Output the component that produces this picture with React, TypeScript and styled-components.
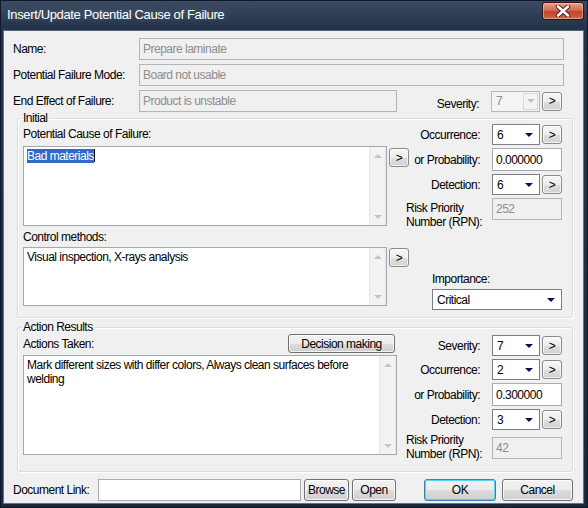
import styled, { createGlobalStyle } from 'styled-components';

const FONT = `"Liberation Sans", Arial, sans-serif`;
const TRACKING = '-0.5px';

const GlobalStyle = createGlobalStyle`
  * { box-sizing: border-box; }
  html, body { margin: 0; padding: 0; background: #ffffff; }
  body { font-family: ${FONT}; font-size: 12px; letter-spacing: ${TRACKING}; color: #000000; }
`;

type ComboProps = { value: string; width?: number; disabled?: boolean };

function Combo({ value, width = 49, disabled }: ComboProps) {
  return (
    <StyledCombo $w={width} $disabled={disabled}>
      <span>{value}</span>
      {disabled ? (
        <DisabledDrop>
          <Arrow $color="#c2c2c2" />
        </DisabledDrop>
      ) : (
        <Arrow $color="#0c0c5a" />
      )}
    </StyledCombo>
  );
}

function ComboWithButton({ value, disabled }: { value: string; disabled?: boolean }) {
  return (
    <ControlPair>
      <Combo value={value} disabled={disabled} />
      <SideButton>&gt;</SideButton>
    </ControlPair>
  );
}

function TextBox({ width, height, children }: { width: number; height: number; children: React.ReactNode }) {
  return (
    <StyledTextBox $w={width} $h={height}>
      <TextContent>{children}</TextContent>
      <ScrollBar>
        <ScrollArrow $up />
        <ScrollArrow />
      </ScrollBar>
    </StyledTextBox>
  );
}

type RatingProps = {
  severity?: string;
  occurrence: string;
  probability: string;
  detection: string;
  rpn: string;
  rpnLabelTop: number;
  rpnInputTop: number;
};

function RatingGrid({ severity, occurrence, probability, detection, rpn, rpnLabelTop, rpnInputTop }: RatingProps) {
  return (
    <Ratings>
      {severity && (
        <>
          <RightLabel>Severity:</RightLabel>
          <ComboWithButton value={severity} />
        </>
      )}
      <RightLabel>Occurrence:</RightLabel>
      <ComboWithButton value={occurrence} />
      <RightLabel>or Probability:</RightLabel>
      <Input $w={70} $h={23} defaultValue={probability} />
      <RightLabel>Detection:</RightLabel>
      <ComboWithButton value={detection} />
      <RpnLabel $top={rpnLabelTop}>
        Risk Priority
        <br />
        Number (RPN):
      </RpnLabel>
      <Input $w={70} $h={22} $top={rpnInputTop} disabled defaultValue={rpn} />
    </Ratings>
  );
}

export default function App() {
  return (
    <>
      <GlobalStyle />
      <Window>
        <TitleBar>
          <Title>Insert/Update Potential Cause of Failure</Title>
          <CloseButton>
            <svg width="18" height="12" viewBox="0 0 18 12">
              <path d="M4 1.5 L14 10.5 M14 1.5 L4 10.5" stroke="#4a1a10" strokeWidth="4.4" strokeLinecap="round" />
              <path d="M4 1.5 L14 10.5 M14 1.5 L4 10.5" stroke="#ffffff" strokeWidth="2.6" strokeLinecap="round" />
            </svg>
          </CloseButton>
        </TitleBar>

        <Client>
          <TopFields>
            <FieldRow>
              <Label>Name:</Label>
              <Input disabled defaultValue="Prepare laminate" />
            </FieldRow>
            <FieldRow>
              <Label>Potential Failure Mode:</Label>
              <Input disabled defaultValue="Board not usable" />
            </FieldRow>
            <EffectRow>
              <Label>End Effect of Failure:</Label>
              <Input $w={258} disabled defaultValue="Product is unstable" />
              <SeverityLabel>Severity:</SeverityLabel>
              <ComboWithButton value="7" disabled />
            </EffectRow>
          </TopFields>

          <Group $pb={11}>
            <Legend>Initial</Legend>
            <GroupBody>
              <LeftColumn>
                <Label $top={2}>Potential Cause of Failure:</Label>
                <TextRow $top={5}>
                  <TextBox width={365} height={80}>
                    <Selected>Bad materials</Selected>
                    <Caret />
                  </TextBox>
                  <SideButton $top={2}>&gt;</SideButton>
                </TextRow>
                <Label $top={4}>Control methods:</Label>
                <TextRow $top={3}>
                  <TextBox width={365} height={59}>
                    Visual inspection, X-rays analysis
                  </TextBox>
                  <SideButton $top={1}>&gt;</SideButton>
                </TextRow>
              </LeftColumn>
              <RightColumn $top={-1}>
                <RatingGrid
                  occurrence="6"
                  probability="0.000000"
                  detection="6"
                  rpn="252"
                  rpnLabelTop={3}
                  rpnInputTop={0}
                />
                <Importance>
                  <Label>Importance:</Label>
                  <Select>
                    <span>Critical</span>
                    <Arrow $color="#0c0c5a" />
                  </Select>
                </Importance>
              </RightColumn>
            </GroupBody>
          </Group>

          <Group $pb={10} $mt={2}>
            <Legend>Action Results</Legend>
            <GroupBody>
              <LeftColumn>
                <ActionsHeader>
                  <Label>Actions Taken:</Label>
                  <Button $w={107} $h={19}>Decision making</Button>
                </ActionsHeader>
                <TextRow $top={2}>
                  <TextBox width={374} height={100}>
                    Mark different sizes with differ colors, Always clean surfaces before welding
                  </TextBox>
                </TextRow>
              </LeftColumn>
              <RightColumn $top={1}>
                <RatingGrid
                  severity="7"
                  occurrence="2"
                  probability="0.300000"
                  detection="3"
                  rpn="42"
                  rpnLabelTop={0}
                  rpnInputTop={4}
                />
              </RightColumn>
            </GroupBody>
          </Group>

          <Footer>
            <FooterLabel>Document Link:</FooterLabel>
            <Input $w={203} />
            <Button $w={45} $ml={3}>Browse</Button>
            <Button $w={44} $ml={3}>Open</Button>
            <Button $w={72} $ml={28} $focused>OK</Button>
            <Button $w={71} $ml={6}>Cancel</Button>
          </Footer>
        </Client>
      </Window>
    </>
  );
}

const Window = styled.div`
  display: flex;
  flex-direction: column;
  width: 588px;
  height: 508px;
  padding: 0 4px 4px 3px;
  background: linear-gradient(180deg, #3c4c63 0px, #24334a 28px, #1a283d 100%);
  box-shadow: inset 0 0 0 1px #0e1828;
`;

const TitleBar = styled.div`
  display: flex;
  align-items: flex-start;
  height: 30px;
  flex-shrink: 0;
  padding-left: 4px;
`;

const Title = styled.div`
  margin-top: 7px;
  color: #ffffff;
  font-size: 13px;
  line-height: 15px;
  letter-spacing: -0.35px;
  text-shadow: 0 0 6px rgba(255, 255, 255, 0.25);
`;

const CloseButton = styled.div`
  display: flex;
  align-items: center;
  justify-content: center;
  width: 42px;
  height: 18px;
  margin: 2px 0 0 auto;
  border: 1px solid #3a140c;
  border-radius: 3px;
  background: linear-gradient(180deg, #e8a08c 0%, #d56b52 45%, #c0432a 55%, #d0674b 100%);
  box-shadow: inset 0 0 0 1px rgba(255, 220, 200, 0.45);
`;

const Client = styled.div`
  flex: 1;
  display: flex;
  flex-direction: column;
  padding-top: 7px;
  background: #f0f0f0;
  border: 1px solid #62738a;
  border-top-color: #55657a;
`;

const TopFields = styled.div`
  display: flex;
  flex-direction: column;
  gap: 4px;
  padding: 0 19px 0 9px;
`;

const FieldRow = styled.div`
  display: grid;
  grid-template-columns: 126px 1fr;
  align-items: center;
`;

const EffectRow = styled.div`
  display: grid;
  grid-template-columns: 126px 258px 1fr auto;
  align-items: center;
  padding-right: 2px;
`;

const Label = styled.div<{ $top?: number }>`
  margin-top: ${({ $top }) => $top ?? 0}px;
  line-height: 14px;
  white-space: nowrap;
`;

const RightLabel = styled.div`
  line-height: 14px;
  text-align: right;
  white-space: nowrap;
`;

const SeverityLabel = styled(RightLabel)`
  padding: 5px 12px 0 0;
`;

const RpnLabel = styled.div<{ $top: number }>`
  align-self: start;
  margin: ${({ $top }) => $top}px 0 0 -3px;
  line-height: 14px;
  white-space: nowrap;
`;

const Input = styled.input<{ $w?: number; $h?: number; $top?: number }>`
  width: ${({ $w }) => ($w ? `${$w}px` : '100%')};
  height: ${({ $h }) => $h ?? 22}px;
  margin: ${({ $top }) => $top ?? 0}px 0 0 0;
  padding: 0 3px;
  font-family: ${FONT};
  font-size: 12px;
  letter-spacing: ${TRACKING};
  color: #000000;
  background: #ffffff;
  border: 1px solid #a4a9b0;
  border-top-color: #abadb3;
  border-radius: 0;
  outline: none;
  align-self: ${({ $top }) => ($top !== undefined ? 'start' : 'center')};

  &:disabled {
    color: #8d8d8d;
    background: #f0f0f0;
    border-color: #b2b6bb;
  }
`;

const StyledCombo = styled.div<{ $w: number; $disabled?: boolean }>`
  display: flex;
  align-items: center;
  width: ${({ $w }) => $w}px;
  height: 21px;
  padding-left: 4px;
  color: ${({ $disabled }) => ($disabled ? '#8d8d8d' : '#000000')};
  background: ${({ $disabled }) => ($disabled ? '#f4f4f4' : '#ffffff')};
  border: 1px solid ${({ $disabled }) => ($disabled ? '#b5b9be' : '#7a7e86')};
`;

const DisabledDrop = styled.div`
  display: flex;
  align-items: center;
  justify-content: center;
  width: 15px;
  height: 17px;
  margin-left: auto;
  margin-right: 1px;
  border: 1px solid #d6d9dc;
  background: #f4f4f4;
`;

const Arrow = styled.span<{ $color: string }>`
  width: 0;
  height: 0;
  margin-left: auto;
  margin-right: 6px;
  border-left: 4px solid transparent;
  border-right: 4px solid transparent;
  border-top: 4px solid ${({ $color }) => $color};

  ${DisabledDrop} > & {
    margin: 0;
  }
`;

const ControlPair = styled.div`
  display: flex;
  align-items: center;
  gap: 2px;
`;

const SideButton = styled.div<{ $top?: number }>`
  display: flex;
  align-items: center;
  justify-content: center;
  flex-shrink: 0;
  width: 20px;
  height: 19px;
  margin-top: ${({ $top }) => $top ?? 0}px;
  border: 1px solid #8a8a8a;
  border-radius: 3px;
  background: linear-gradient(180deg, #f6f6f6 0%, #ececec 50%, #dedede 51%, #d2d2d2 100%);
  box-shadow: inset 0 0 0 1px rgba(255, 255, 255, 0.7);
  font-size: 12px;
  line-height: 1;
`;

const Group = styled.fieldset<{ $pb: number; $mt?: number }>`
  min-width: 0;
  margin: ${({ $mt }) => $mt ?? -1}px 10px 0 13px;
  padding: 0 0 ${({ $pb }) => $pb}px 5px;
  border: 1px solid #d5dfe5;
  border-radius: 3px;
  box-shadow: inset 1px 1px 0 #ffffff, 1px 1px 0 #ffffff;
`;

const Legend = styled.legend`
  margin-left: -1px;
  padding: 0 1px;
  line-height: 14px;
`;

const GroupBody = styled.div`
  display: grid;
  grid-template-columns: 386px 1fr;
`;

const LeftColumn = styled.div`
  display: flex;
  flex-direction: column;
`;

const RightColumn = styled.div<{ $top: number }>`
  display: flex;
  flex-direction: column;
  margin-top: ${({ $top }) => $top}px;
`;

const TextRow = styled.div<{ $top: number }>`
  display: flex;
  align-items: flex-start;
  gap: 2px;
  margin-top: ${({ $top }) => $top}px;
`;

const StyledTextBox = styled.div<{ $w: number; $h: number }>`
  display: flex;
  width: ${({ $w }) => $w}px;
  height: ${({ $h }) => $h}px;
  background: #ffffff;
  border: 1px solid #a4a9b0;
`;

const TextContent = styled.div`
  flex: 1;
  padding: 2px 3px;
  line-height: 14px;
`;

const ScrollBar = styled.div`
  display: flex;
  flex-direction: column;
  justify-content: space-between;
  width: 17px;
  background: linear-gradient(90deg, #e6e6e6 0px, #f3f3f3 2px, #f3f3f3 15px, #e6e6e6 17px);
`;

const ScrollArrow = styled.div<{ $up?: boolean }>`
  display: flex;
  align-items: center;
  justify-content: center;
  height: 17px;

  &::after {
    content: '';
    width: 0;
    height: 0;
    border-left: 4px solid transparent;
    border-right: 4px solid transparent;
    ${({ $up }) => ($up ? 'border-bottom: 4px solid #c4c4c4;' : 'border-top: 4px solid #c4c4c4;')}
  }
`;

const Selected = styled.span`
  color: #ffffff;
  background: #3169c6;
`;

const Caret = styled.span`
  display: inline-block;
  width: 1px;
  height: 13px;
  vertical-align: -2px;
  background: #000000;
`;

const Ratings = styled.div`
  display: grid;
  grid-template-columns: 71px 70px;
  column-gap: 12px;
  row-gap: 3px;
  align-items: center;
`;

const Importance = styled.div`
  display: flex;
  flex-direction: column;
  gap: 3px;
  margin: auto 0 -4px 23px;
`;

const Select = styled.div`
  display: flex;
  align-items: center;
  width: 130px;
  height: 21px;
  padding-left: 4px;
  background: #ffffff;
  border: 1px solid #7a7e86;
`;

const ActionsHeader = styled.div`
  display: flex;
  align-items: center;
  justify-content: space-between;
  width: 372px;
  height: 19px;
`;

const Button = styled.button<{ $w: number; $h?: number; $ml?: number; $focused?: boolean }>`
  width: ${({ $w }) => $w}px;
  height: ${({ $h }) => $h ?? 22}px;
  margin-left: ${({ $ml }) => $ml ?? 0}px;
  padding: 0;
  font-family: ${FONT};
  font-size: 12px;
  letter-spacing: ${TRACKING};
  color: #000000;
  border: 1px solid ${({ $focused }) => ($focused ? '#3c7fb1' : '#707070')};
  border-radius: 3px;
  background: linear-gradient(180deg, #f2f2f2 0%, #ebebeb 50%, #dddddd 51%, #cfcfcf 100%);
  box-shadow: inset 0 0 0 1px ${({ $focused }) => ($focused ? '#52d5f6' : 'rgba(255, 255, 255, 0.75)')};
`;

const Footer = styled.div`
  display: flex;
  align-items: center;
  margin-top: 7px;
  padding: 0 9px;
`;

const FooterLabel = styled.div`
  width: 85px;
  line-height: 14px;
`;
